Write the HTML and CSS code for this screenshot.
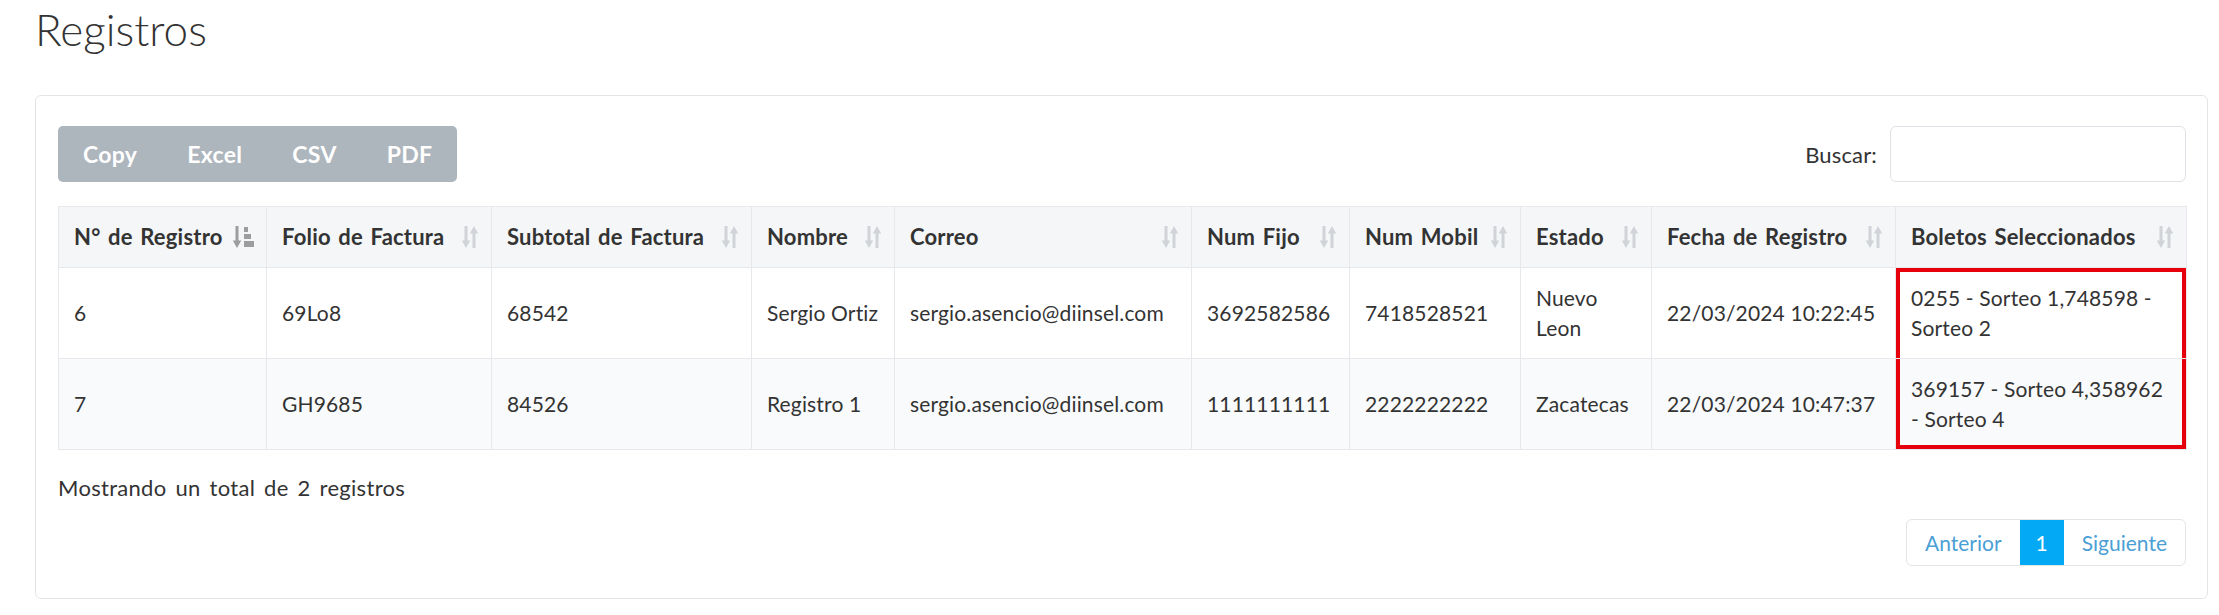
FILE: index.html
```html
<!DOCTYPE html>
<html lang="es">
<head>
  <meta charset="UTF-8" />
  <meta name="viewport" content="width=device-width, initial-scale=1.0"/>
  <title>Registros</title>
  <link rel="stylesheet" href="styles.css">
</head>
<body>
<svg class="defs" width="0" height="0" aria-hidden="true">
  <symbol id="sort" viewBox="0 0 18 24">
    <path d="M5 1v16" stroke="currentColor" stroke-width="3"/>
    <path d="M0.8 15.5h8.4L5 23z" fill="currentColor"/>
    <path d="M13 23V7" stroke="currentColor" stroke-width="3"/>
    <path d="M8.8 8.5h8.4L13 1z" fill="currentColor"/>
  </symbol>
  <symbol id="sort-asc" viewBox="0 0 22 24">
    <path d="M5 1v16" stroke="currentColor" stroke-width="3"/>
    <path d="M0.8 15.5h8.4L5 23z" fill="currentColor"/>
    <rect x="12" y="2" width="4" height="5"/>
    <rect x="12" y="9" width="7" height="5"/>
    <rect x="12" y="16" width="10" height="6"/>
  </symbol>
</svg>

<div class="page">
  <h1>Registros</h1>

  <div class="card">
    <div class="toolbar">
      <div class="btn-group">
        <button class="btn">Copy</button>
        <button class="btn">Excel</button>
        <button class="btn">CSV</button>
        <button class="btn">PDF</button>
      </div>
      <label class="search">Buscar: <input type="search"/></label>
    </div>

    <table class="grid">
      <colgroup>
        <col class="c1"><col class="c2"><col class="c3"><col class="c4"><col class="c5">
        <col class="c6"><col class="c7"><col class="c8"><col class="c9"><col class="c10">
      </colgroup>
      <thead>
        <tr>
          <th><div class="th"><span>N° de Registro</span><svg class="ico on"><use href="#sort-asc"/></svg></div></th>
          <th><div class="th"><span>Folio de Factura</span><svg class="ico"><use href="#sort"/></svg></div></th>
          <th><div class="th"><span>Subtotal de Factura</span><svg class="ico"><use href="#sort"/></svg></div></th>
          <th><div class="th"><span>Nombre</span><svg class="ico"><use href="#sort"/></svg></div></th>
          <th><div class="th"><span>Correo</span><svg class="ico"><use href="#sort"/></svg></div></th>
          <th><div class="th"><span>Num Fijo</span><svg class="ico"><use href="#sort"/></svg></div></th>
          <th><div class="th"><span>Num Mobil</span><svg class="ico"><use href="#sort"/></svg></div></th>
          <th><div class="th"><span>Estado</span><svg class="ico"><use href="#sort"/></svg></div></th>
          <th><div class="th"><span>Fecha de Registro</span><svg class="ico"><use href="#sort"/></svg></div></th>
          <th><div class="th"><span>Boletos Seleccionados</span><svg class="ico"><use href="#sort"/></svg></div></th>
        </tr>
      </thead>
      <tbody>
        <tr>
          <td>6</td>
          <td>69Lo8</td>
          <td>68542</td>
          <td>Sergio Ortiz</td>
          <td>sergio.asencio@diinsel.com</td>
          <td>3692582586</td>
          <td>7418528521</td>
          <td>Nuevo Leon</td>
          <td>22/03/2024 10:22:45</td>
          <td class="pick">0255 - Sorteo 1,748598 - Sorteo 2</td>
        </tr>
        <tr>
          <td>7</td>
          <td>GH9685</td>
          <td>84526</td>
          <td>Registro 1</td>
          <td>sergio.asencio@diinsel.com</td>
          <td>1111111111</td>
          <td>2222222222</td>
          <td>Zacatecas</td>
          <td>22/03/2024 10:47:37</td>
          <td class="pick">369157 - Sorteo 4,358962 - Sorteo 4</td>
        </tr>
      </tbody>
    </table>

    <div class="info">Mostrando un total de 2 registros</div>
    <div class="pager">
      <ul>
        <li><a href="#">Anterior</a></li>
        <li class="active"><a href="#">1</a></li>
        <li><a href="#">Siguiente</a></li>
      </ul>
    </div>
  </div>
</div>
</body>
</html>
```

FILE: styles.css
```css
* { box-sizing: border-box; }
body {
  margin: 0;
  font-family: Lato, "Helvetica Neue", Arial, sans-serif;
  font-size: 21px;
  letter-spacing: 0.15px;
  color: #333;
  background: #fff;
}

.defs { position: absolute; }

.page {
  padding: 4px 11px 0 35px;
}

h1 {
  font-size: 44px;
  font-weight: 300;
  line-height: 50px;
  letter-spacing: 0;
  margin: 0 0 41px;
}

.card {
  border: 1px solid #e2e5e8;
  border-radius: 6px;
  padding: 30px 21px 32px 22px;
}

.toolbar {
  display: flex;
  justify-content: space-between;
  align-items: center;
  margin-bottom: 24px;
}

.btn-group {
  display: flex;
  background: #adb5bd;
  border-radius: 5px;
}

.btn {
  border: 0;
  background: transparent;
  color: #fff;
  font-family: inherit;
  font-size: 23px;
  font-weight: 700;
  line-height: 30px;
  letter-spacing: 0.3px;
  padding: 13px 25px;
}

.search {
  display: flex;
  align-items: center;
  gap: 13px;
  font-size: 22px;
}

.search input {
  width: 296px;
  height: 56px;
  border: 1px solid #dfe2e6;
  border-radius: 6px;
  background: #fff;
}

.grid {
  width: 100%;
  border-collapse: collapse;
  table-layout: fixed;
}

.c1 { width: 208px; }
.c2 { width: 225px; }
.c3 { width: 260px; }
.c4 { width: 143px; }
.c5 { width: 297px; }
.c6 { width: 158px; }
.c7 { width: 171px; }
.c8 { width: 131px; }
.c9 { width: 244px; }
.c10 { width: 291px; }

.grid th, .grid td {
  border: 1px solid #e6e8eb;
  line-height: 30px;
  text-align: left;
  vertical-align: middle;
}

.grid th {
  background: #f5f6f8;
  font-size: 22px;
  font-weight: 700;
  letter-spacing: 0.2px;
  word-spacing: 2px;
  padding: 15px 12px 15px 15px;
}

.grid td {
  padding: 15px 12px 15px 15px;
}

.grid tbody tr:nth-child(2) td {
  background: #f9fafb;
}

.th {
  display: flex;
  justify-content: space-between;
  align-items: center;
  white-space: nowrap;
}

.ico {
  width: 18px;
  height: 24px;
  color: #d0d3d7;
  flex: none;
}

.ico.on {
  width: 22px;
  color: #9d9d9d;
  fill: #9d9d9d;
}

.grid td.pick {
  box-shadow: inset 4px 0 #e5000b, inset -4px 0 #e5000b;
}

.grid tbody tr:first-child td.pick {
  box-shadow: inset 4px 0 #e5000b, inset -4px 0 #e5000b, inset 0 4px #e5000b;
}

.grid tbody tr:last-child td.pick {
  box-shadow: inset 4px 0 #e5000b, inset -4px 0 #e5000b, inset 0 -4px #e5000b;
}

.info {
  margin-top: 23px;
  line-height: 30px;
  font-size: 22px;
  letter-spacing: 0.3px;
  word-spacing: 3px;
}

.pager {
  display: flex;
  justify-content: flex-end;
  margin-top: 16px;
}

.pager ul {
  display: flex;
  list-style: none;
  margin: 0;
  padding: 0;
  border: 1px solid #e2e5e8;
  border-radius: 6px;
  overflow: hidden;
  letter-spacing: 0;
}

.pager a {
  display: block;
  padding: 8px 18px;
  line-height: 29px;
  color: #4a9fd5;
  text-decoration: none;
}

.pager .active a {
  background: #03a9f4;
  color: #fff;
  padding: 8px 16px;
}
```
